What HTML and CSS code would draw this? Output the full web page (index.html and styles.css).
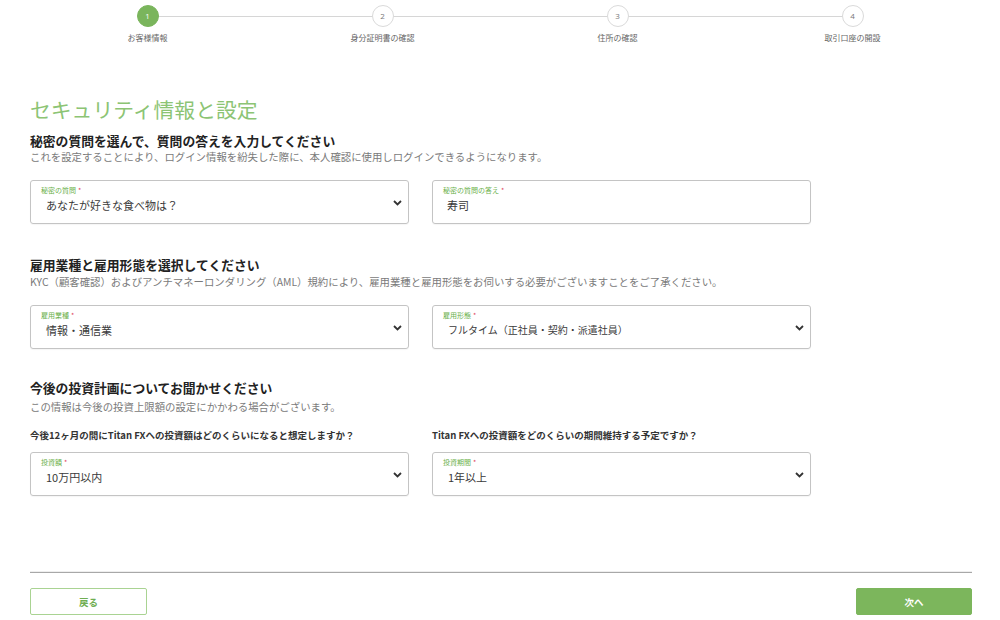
FILE: index.html
```html
<!DOCTYPE html>
<html lang="ja">
<head>
<meta charset="utf-8">
<link rel="stylesheet" href="styles.css">
</head>
<body>
<div class="page">
  <div class="stepper">
    <div class="stepper-line"></div>
    <div class="step active"><div class="circle">1</div><div class="step-label">お客様情報</div></div>
    <div class="step"><div class="circle">2</div><div class="step-label">身分証明書の確認</div></div>
    <div class="step"><div class="circle">3</div><div class="step-label">住所の確認</div></div>
    <div class="step"><div class="circle">4</div><div class="step-label">取引口座の開設</div></div>
  </div>

  <div class="content">
    <h1 class="title">セキュリティ情報と設定</h1>

    <section class="section s1">
      <h2 class="heading">秘密の質問を選んで、質問の答えを入力してください</h2>
      <p class="desc">これを設定することにより、ログイン情報を紛失した際に、本人確認に使用しログインできるようになります。</p>
      <div class="row">
        <div class="field">
          <div class="field-label">秘密の質問<span class="req">*</span></div>
          <div class="field-value">あなたが好きな食べ物は？</div>
          <svg class="chev" width="9" height="6" viewBox="0 0 9 6"><polyline points="1,1 4.5,4.5 8,1" fill="none" stroke="#333" stroke-width="1.8"/></svg>
        </div>
        <div class="field">
          <div class="field-label">秘密の質問の答え<span class="req">*</span></div>
          <div class="field-value input">寿司</div>
        </div>
      </div>
    </section>

    <section class="section s2">
      <h2 class="heading">雇用業種と雇用形態を選択してください</h2>
      <p class="desc">KYC（顧客確認）およびアンチマネーロンダリング（AML）規約により、雇用業種と雇用形態をお伺いする必要がございますことをご了承ください。</p>
      <div class="row">
        <div class="field">
          <div class="field-label">雇用業種<span class="req">*</span></div>
          <div class="field-value">情報・通信業</div>
          <svg class="chev" width="9" height="6" viewBox="0 0 9 6"><polyline points="1,1 4.5,4.5 8,1" fill="none" stroke="#333" stroke-width="1.8"/></svg>
        </div>
        <div class="field">
          <div class="field-label">雇用形態<span class="req">*</span></div>
          <div class="field-value narrow">フルタイム（正社員・契約・派遣社員）</div>
          <svg class="chev" width="9" height="6" viewBox="0 0 9 6"><polyline points="1,1 4.5,4.5 8,1" fill="none" stroke="#333" stroke-width="1.8"/></svg>
        </div>
      </div>
    </section>

    <section class="section s3">
      <h2 class="heading">今後の投資計画についてお聞かせください</h2>
      <p class="desc">この情報は今後の投資上限額の設定にかかわる場合がございます。</p>
      <div class="row">
        <div class="col">
          <div class="question">今後12ヶ月の間にTitan FXへの投資額はどのくらいになると想定しますか？</div>
          <div class="field">
            <div class="field-label">投資額<span class="req">*</span></div>
            <div class="field-value">10万円以内</div>
            <svg class="chev" width="9" height="6" viewBox="0 0 9 6"><polyline points="1,1 4.5,4.5 8,1" fill="none" stroke="#333" stroke-width="1.8"/></svg>
          </div>
        </div>
        <div class="col">
          <div class="question">Titan FXへの投資額をどのくらいの期間維持する予定ですか？</div>
          <div class="field">
            <div class="field-label">投資期間<span class="req">*</span></div>
            <div class="field-value">1年以上</div>
            <svg class="chev" width="9" height="6" viewBox="0 0 9 6"><polyline points="1,1 4.5,4.5 8,1" fill="none" stroke="#333" stroke-width="1.8"/></svg>
          </div>
        </div>
      </div>
    </section>
  </div>

  <div class="footer">
    <button class="btn btn-back">戻る</button>
    <button class="btn btn-next">次へ</button>
  </div>
</div>
</body>
</html>
```

FILE: styles.css
```css
* { box-sizing: border-box; }
html, body {
  margin: 0;
  padding: 0;
  background: #fff;
  font-family: "Noto Sans CJK JP", "Noto Sans", sans-serif;
  color: #222;
}
.page {
  width: 1000px;
  height: 620px;
  padding: 0 28px 0 30px;
  overflow: hidden;
}

/* stepper */
.stepper {
  position: relative;
  display: grid;
  grid-template-columns: repeat(4, 1fr);
  width: 940px;
  height: 50px;
  padding-top: 5px;
}
.stepper-line {
  position: absolute;
  left: 117px;
  right: 117px;
  top: 16px;
  height: 1px;
  background: #d6d6d6;
}
.step {
  position: relative;
  display: flex;
  flex-direction: column;
  align-items: center;
}
.circle {
  width: 22px;
  height: 22px;
  border-radius: 50%;
  border: 1px solid #dadada;
  background: #fff;
  color: #777;
  font-size: 8px;
  line-height: 20px;
  text-align: center;
  font-family: "Open Sans", sans-serif;
}
.step.active .circle {
  background: #7ab55c;
  border-color: #7ab55c;
  color: #fff;
}
.step-label {
  margin-top: 5px;
  font-size: 8px;
  line-height: 11px;
  color: #666;
}

/* content */
.content {
  width: 790px;
  padding-top: 45px;
}
.title {
  margin: 0 0 9px;
  font-size: 20.8px;
  line-height: 28px;
  font-weight: 400;
  color: #8cc474;
}
.heading {
  margin: 0;
  font-size: 12.8px;
  line-height: 18px;
  font-weight: 700;
  color: #222;
}
.desc {
  margin: 0;
  font-size: 10.4px;
  line-height: 14px;
  color: #7a7a7a;
}
.row {
  display: flex;
  gap: 23px;
  margin-top: 16px;
}
.s2 { margin-top: 32px; }
.s2 .desc { margin-top: 1px; }
.s3 { margin-top: 30px; }
.s3 .desc { margin-top: 3px; }
.s3 .row { margin-top: 14px; }
.col {
  width: 379px;
  display: flex;
  flex-direction: column;
}
.question {
  font-size: 9.5px;
  line-height: 14px;
  font-weight: 700;
  color: #333;
  margin-bottom: 10px;
}
.field {
  position: relative;
  width: 379px;
  height: 44px;
  border: 1px solid #c4c4c4;
  border-radius: 3px;
  padding: 4px 12px 0 10px;
  box-shadow: 0 1px 1px rgba(0,0,0,0.04);
}
.field-label {
  font-size: 7px;
  line-height: 10px;
  color: #6bb04a;
}
.req { color: #e0455a; margin-left: 2px; }
.field-value {
  margin-top: 1px;
  padding-left: 5px;
  font-size: 11px;
  line-height: 18px;
  color: #3a3a3a;
}
.field-value.narrow { font-size: 10px; }
.field-value.input { padding-left: 4px; }
.chev {
  position: absolute;
  right: 6px;
  top: 19px;
}

/* footer */
.footer {
  margin-top: 76px;
  width: 942px;
  border-top: 1.5px solid #a8a8a8;
  box-shadow: 0 -1px 0 #eee;
  display: flex;
  justify-content: space-between;
  padding-top: 15px;
}
.btn {
  width: 117px;
  height: 27px;
  border-radius: 2px;
  font-family: "Noto Sans CJK JP", sans-serif;
  font-size: 9.5px;
  font-weight: 700;
  cursor: pointer;
}
.btn-back {
  background: #fff;
  border: 1px solid #a9d392;
  color: #6fae52;
}
.btn-next {
  width: 116px;
  background: #7cb65c;
  border: 1px solid #7cb65c;
  color: #fff;
}
```
